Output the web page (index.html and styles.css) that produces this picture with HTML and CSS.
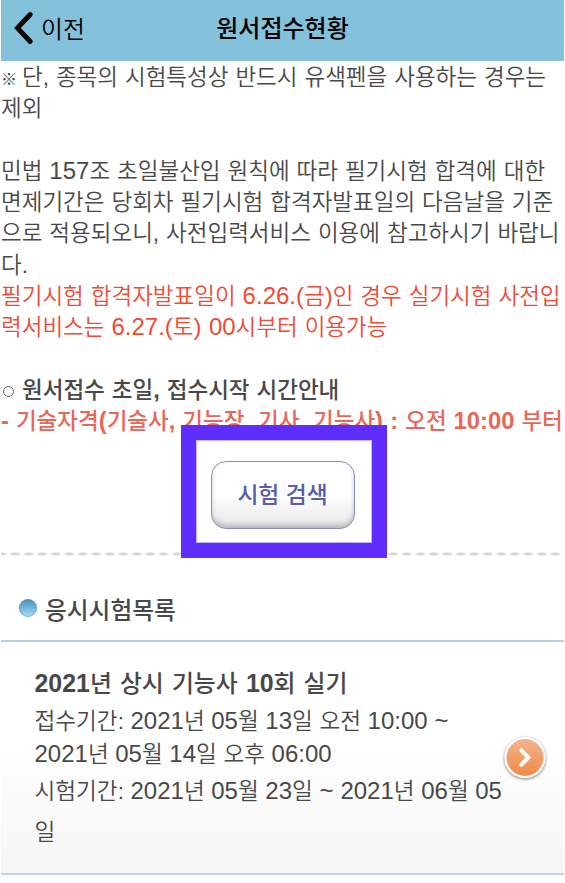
FILE: index.html
```html
<!DOCTYPE html>
<html lang="ko">
<head>
    <meta charset="UTF-8">
    <meta name="viewport" content="width=device-width, initial-scale=1.0">
    <title>원서접수현황</title>
    <link rel="stylesheet" href="styles.css">
</head>
<body>
    <header class="header">
        <a class="back">
            <svg class="back-icon" width="20" height="34" viewBox="0 0 20 34">
                <path d="M17.2 3.5 L4.4 17 L17.2 30.5" fill="none" stroke="#000" stroke-width="4.8" stroke-linecap="round"/>
            </svg>
            <span>이전</span>
        </a>
        <h1 class="title">원서접수현황</h1>
    </header>

    <main>
        <section class="notice">
            <p class="line"><span class="mark">※</span>단, 종목의 시험특성상 반드시 유색펜을 사용하는 경우는</p>
            <p class="line">제외</p>
            <p class="line"></p>
            <p class="line">민법 <span class="num">157</span>조 초일불산입 원칙에 따라 필기시험 합격에 대한</p>
            <p class="line">면제기간은 당회차 필기시험 합격자발표일의 다음날을 기준</p>
            <p class="line">으로 적용되오니, 사전입력서비스 이용에 참고하시기 바랍니</p>
            <p class="line">다.</p>
            <p class="line red">필기시험 합격자발표일이 <span class="num">6.26.(</span>금<span class="num">)</span>인 경우 실기시험 사전입</p>
            <p class="line red">력서비스는 <span class="num">6.27.(</span>토<span class="num">) 00</span>시부터 이용가능</p>
            <p class="line"></p>
            <p class="line bold"><span class="circle"></span>원서접수 초일<span class="num">,</span> 접수시작 시간안내</p>
            <p class="line bold coral"><span class="num">-</span> 기술자격<span class="num">(</span>기술사<span class="num">,</span> 기능장<span class="num">,</span> 기사<span class="num">,</span> 기능사<span class="num">) :</span> 오전 <span class="num">10:00</span> 부터</p>
        </section>

        <div class="search">
            <button class="search-btn">시험 검색</button>
            <div class="highlight"></div>
        </div>
        <div class="dashes"></div>

        <h2 class="list-title"><span class="bullet"></span>응시시험목록</h2>

        <section class="exam">
            <div class="exam-info">
                <h3 class="exam-name"><span class="num">2021</span>년 상시 기능사 <span class="num">10</span>회 실기</h3>
                <p class="row">접수기간: <span class="num">2021</span>년 <span class="num">05</span>월 <span class="num">13</span>일 오전 <span class="num">10:00 ~</span></p>
                <p class="row"><span class="num">2021</span>년 <span class="num">05</span>월 <span class="num">14</span>일 오후 <span class="num">06:00</span></p>
                <p class="row tall">시험기간: <span class="num">2021</span>년 <span class="num">05</span>월 <span class="num">23</span>일 <span class="num">~ 2021</span>년 <span class="num">06</span>월 <span class="num">05</span></p>
                <p class="row tall">일</p>
            </div>
            <svg class="go" width="46" height="48" viewBox="0 0 46 48">
                <defs>
                    <linearGradient id="orange" x1="0" y1="0" x2="0" y2="1">
                        <stop offset="0" stop-color="#f3b48c"/>
                        <stop offset="1" stop-color="#ef8b48"/>
                    </linearGradient>
                </defs>
                <circle class="go-ring" cx="23" cy="22.5" r="20.7" fill="#fff"/>
                <circle cx="23" cy="22.5" r="18.5" fill="url(#orange)"/>
                <path d="M19.4 15.3 L26.4 22.5 L19.4 29.7" fill="none" stroke="#fff" stroke-width="4" stroke-linecap="round"/>
            </svg>
        </section>
    </main>
</body>
</html>
```

FILE: styles.css
```css
* {
    box-sizing: border-box;
}
body, h1, h2, h3, p {
    margin: 0;
}
body {
    width: 565px;
    height: 883px;
    padding: 0 1px;
    overflow: hidden;
    background: #fff;
    color: #484848;
    font-family: "Liberation Sans", "Noto Sans CJK KR", sans-serif;
    font-size: 22.5px;
    font-weight: 350;
}
.header {
    display: grid;
    grid-template-columns: 1fr auto 1fr;
    align-items: center;
    height: 61px;
    padding: 0 0 5px 12px;
    background: #84c1db;
    color: #000;
}
.back {
    display: flex;
    align-items: center;
    gap: 8px;
    font-size: 23.8px;
}
.back span {
    padding-bottom: 2px;
}
.title {
    margin-left: -12px;
    padding-bottom: 3px;
    font-size: 24px;
    font-weight: 500;
}
.notice {
    height: 376px;
    padding-top: 1px;
}
.line {
    height: 31.27px;
    line-height: 31.27px;
    white-space: nowrap;
    word-spacing: 0.7px;
}
.num {
    font-size: 24px;
    line-height: 1;
}
.mark {
    display: inline-block;
    width: 21px;
    font-size: 16px;
}
.red {
    color: #f24a35;
}
.bold {
    font-weight: 500;
}
.bold .num {
    font-size: 23.8px;
    font-weight: 700;
}
.coral {
    color: #e86757;
}
.circle {
    display: inline-block;
    width: 11px;
    height: 11px;
    margin: 0 8px 1px 2px;
    border: 1px solid #666;
    border-radius: 50%;
}
.search {
    position: relative;
    display: flex;
    justify-content: center;
    height: 115px;
    padding-top: 23px;
}
.search-btn {
    width: 144px;
    height: 68px;
    margin-top: 1px;
    padding: 0 0 4px;
    border: 1.5px solid #858dc4;
    border-radius: 15px;
    background: linear-gradient(#fff 50%, #f3f3f3 75%, #e4e4e4);
    box-shadow: inset 0 -3px 5px rgba(0, 0, 0, 0.2);
    color: #585ca9;
    font-family: inherit;
    font-size: 22.8px;
    font-weight: 500;
}
/* Frame around the search button, runs over the last notice line */
.highlight {
    position: absolute;
    top: -12px;
    left: 180px;
    width: 206px;
    height: 133px;
    border: 15.5px solid #5f2eff;
    box-shadow: inset 0 0 0 1px #c3b5ff;
    z-index: 1;
}
.dashes {
    height: 4px;
    background: radial-gradient(ellipse 6px 2px at 50% 50%, #d6d6d6 55%, transparent) -6px 0 / 13.5px 4px repeat-x;
}
.list-title {
    display: flex;
    align-items: center;
    height: 86px;
    padding: 21px 0 0 18px;
    border-bottom: 2px solid #b9cfe6;
    font-size: 23.7px;
    font-weight: 500;
}
.bullet {
    width: 18px;
    height: 18px;
    margin: 0 8px 2px 0;
    border-radius: 50%;
    background: linear-gradient(#478dbc, #72b4da 50%, #b3e3f7);
    box-shadow: inset 0 0 1px 1px rgba(90, 150, 185, 0.6);
}
.exam {
    display: flex;
    justify-content: space-between;
    height: 233px;
    padding: 22px 16px 0 33.5px;
    border-bottom: 2px solid #bdd3ea;
    background: linear-gradient(#fff 40%, #f6f6f6);
}
.exam-name {
    height: 41px;
    line-height: 40px;
    font-size: 23.9px;
    font-weight: 500;
    word-spacing: 1.4px;
}
.exam-name .num {
    font-size: 24.9px;
    font-weight: 700;
}
.row {
    height: 33px;
    line-height: 33px;
    font-size: 22.6px;
    white-space: nowrap;
    word-spacing: 0.3px;
}
.row .num {
    font-size: 24px;
}
.tall {
    height: 41px;
    line-height: 42px;
}
.go {
    margin-top: 71px;
    flex-shrink: 0;
}
.go-ring {
    filter: drop-shadow(0 1px 1.5px rgba(0, 0, 0, 0.5));
}
```
